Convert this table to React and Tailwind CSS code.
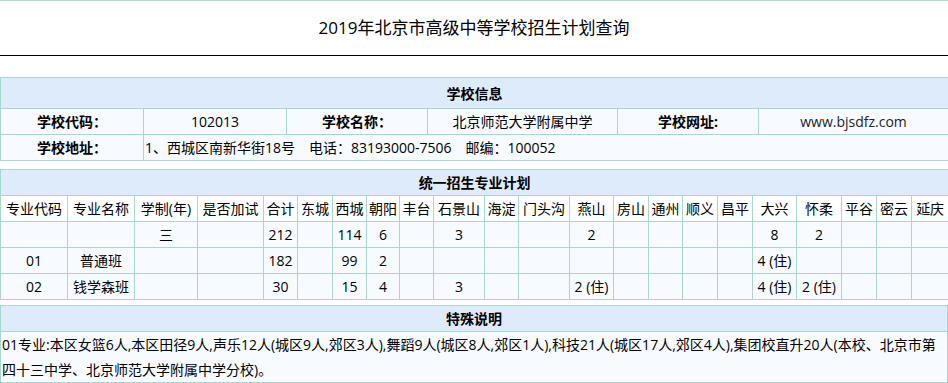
const FONT = "font-['Open_Sans','Noto_Sans_CJK_SC',sans-serif]";

const planCols = [67, 67, 63, 66, 34, 35, 34, 33, 34, 51, 34, 51, 44, 35, 34, 35, 35, 44, 45, 35, 35, 37];

const planHead = [
  "专业代码", "专业名称", "学制(年)", "是否加试", "合计", "东城", "西城", "朝阳", "丰台", "石景山", "海淀",
  "门头沟", "燕山", "房山", "通州", "顺义", "昌平", "大兴", "怀柔", "平谷", "密云", "延庆",
];

const planRows = [
  ["", "", "三", "", "212", "", "114", "6", "", "3", "", "", "2", "", "", "", "", "8", "2", "", "", ""],
  ["01", "普通班", "", "", "182", "", "99", "2", "", "", "", "", "", "", "", "", "", "4 (住)", "", "", "", ""],
  ["02", "钱学森班", "", "", "30", "", "15", "4", "", "3", "", "", "2 (住)", "", "", "", "", "4 (住)", "2 (住)", "", "", ""],
];

const td = "border border-[#a9d6ce] p-0 text-center";

const SchoolInfo = () => (
  <table className="w-[948px] table-fixed border-collapse bg-[#f7fbff] text-[14px] text-black">
    <colgroup>
      {[143, 143, 141, 190, 141, 190].map((w, i) => (
        <col key={i} style={{ width: w }} />
      ))}
    </colgroup>
    <tbody>
      <tr className="h-[31px] bg-[#deebfa]">
        <td colSpan={6} className={`${td} font-bold`}>学校信息</td>
      </tr>
      <tr className="h-[26px]">
        <td className={`${td} font-bold`}>学校代码：</td>
        <td className={td}>102013</td>
        <td className={`${td} font-bold`}>学校名称：</td>
        <td className={td}>北京师范大学附属中学</td>
        <td className={`${td} font-bold`}>学校网址:</td>
        <td className={`${td} text-[#222]`}>www.bjsdfz.com</td>
      </tr>
      <tr className="h-[26px]">
        <td className={`${td} font-bold`}>学校地址：</td>
        <td colSpan={5} className="border border-[#a9d6ce] p-0 pl-[1px] text-left">
          1、西城区南新华街18号　电话：83193000-7506　邮编：100052
        </td>
      </tr>
    </tbody>
  </table>
);

const Plan = () => (
  <table className="w-[948px] table-fixed border-collapse bg-[#f7fbff] text-[14px] text-black">
    <colgroup>
      {planCols.map((w, i) => (
        <col key={i} style={{ width: w }} />
      ))}
    </colgroup>
    <tbody>
      <tr className="h-[26px] bg-[#deebfa]">
        <td colSpan={22} className={`${td} font-bold`}>统一招生专业计划</td>
      </tr>
      <tr className="h-[26px] bg-white">
        {planHead.map((h) => (
          <td key={h} className={`${td} whitespace-nowrap`}>{h}</td>
        ))}
      </tr>
      {planRows.map((row, r) => (
        <tr key={r} className="h-[26px]">
          {row.map((c, i) => (
            <td key={i} className={`${td} whitespace-nowrap`}>{c}</td>
          ))}
        </tr>
      ))}
    </tbody>
  </table>
);

const Notes = () => (
  <table className="w-[948px] border-collapse bg-[#f7fbff] text-[14px] text-black">
    <tbody>
      <tr className="h-[26px] bg-[#deebfa]">
        <td className={`${td} font-bold`}>特殊说明</td>
      </tr>
      <tr>
        <td className="border border-[#a9d6ce] p-0 pl-[1px] text-left leading-[25px]">
          01专业:本区女篮6人,本区田径9人,声乐12人(城区9人,郊区3人),舞蹈9人(城区8人,郊区1人),科技21人(城区17人,郊区4人),集团校直升20人(本校、北京市第四十三中学、北京师范大学附属中学分校)。
        </td>
      </tr>
    </tbody>
  </table>
);

const App = () => {
  return (
    <div className={`${FONT} w-[948px] bg-white`}>
      <div className="h-[1px] bg-[#acd8d0]" />
      <div className="flex h-[55px] items-center justify-center border-b border-black">
        <h1 className="text-[17px] font-normal text-black">2019年北京市高级中等学校招生计划查询</h1>
      </div>
      <div className="mt-[21px]">
        <SchoolInfo />
      </div>
      <div className="mt-[8px]">
        <Plan />
      </div>
      <div className="mt-[5px]">
        <Notes />
      </div>
    </div>
  );
};

export default App;
